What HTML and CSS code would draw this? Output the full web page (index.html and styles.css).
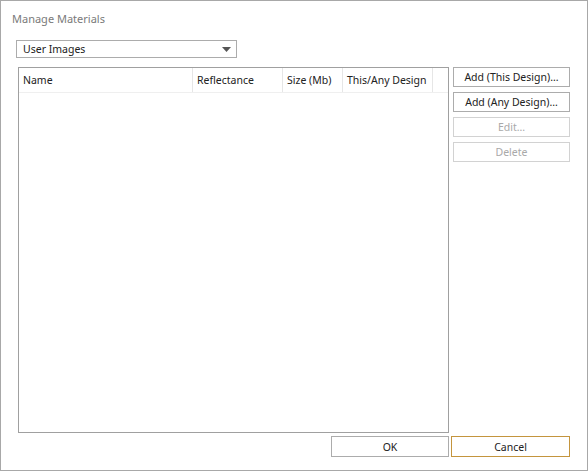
FILE: index.html
```html
<!DOCTYPE html>
<html lang="en">
<head>
<meta charset="utf-8"/>
<title>Manage Materials</title>
<link rel="stylesheet" href="styles.css">
</head>
<body>
<div class="window">
  <div class="title">Manage Materials</div>

  <div class="combo">
    <span>User Images</span>
    <svg class="arrow" width="9" height="5" viewBox="0 0 9 5"><path d="M0 0 L9 0 L4.5 5 Z" fill="#555"/></svg>
  </div>

  <div class="main">
    <div class="list">
      <div class="list-head">
        <div class="col col-name">Name</div>
        <div class="col col-refl">Reflectance</div>
        <div class="col col-size">Size (Mb)</div>
        <div class="col col-scope">This/Any Design</div>
      </div>
    </div>
    <div class="side">
      <button class="btn">Add (This Design)...</button>
      <button class="btn">Add (Any Design)...</button>
      <button class="btn" disabled>Edit...</button>
      <button class="btn" disabled>Delete</button>
    </div>
  </div>

  <div class="footer">
    <button class="btn btn-ok">OK</button>
    <button class="btn btn-cancel">Cancel</button>
  </div>
</div>
</body>
</html>
```

FILE: styles.css
```css
  body {
    margin: 0;
    background: #fff;
    font-family: 'Noto Sans', 'Open Sans', sans-serif;
    font-size: 10.5px;
    color: #222;
  }
  .window {
    width: 588px;
    height: 471px;
    box-sizing: border-box;
    border: 1px solid #a8a8a8;
    background: #fff;
  }
  .title {
    height: 16px;
    line-height: 16px;
    padding: 10px 0 0 11px;
    font-size: 11px;
    color: #7a7a7a;
  }
  .combo {
    margin: 13px 0 0 15px;
    width: 221px;
    height: 18px;
    box-sizing: border-box;
    border: 1px solid #acacac;
    display: flex;
    align-items: center;
    justify-content: space-between;
    padding: 0 5px 0 6px;
  }
  .arrow {
    display: block;
  }
  .main {
    display: flex;
    gap: 4px;
    margin: 9px 16px 0 17px;
  }
  .list {
    width: 431px;
    height: 366px;
    box-sizing: border-box;
    border: 1px solid #a0a0a0;
  }
  .list-head {
    display: flex;
    height: 24px;
    border-bottom: 1px solid #efefef;
  }
  .col {
    box-sizing: border-box;
    padding-left: 4px;
    line-height: 24px;
    border-right: 1px solid #e6e6e6;
    white-space: nowrap;
  }
  .col-name { width: 174px; }
  .col-refl { width: 90px; }
  .col-size { width: 60px; }
  .col-scope { width: 90px; }
  .side {
    display: flex;
    flex-direction: column;
    gap: 5px;
    width: 117px;
  }
  .btn {
    height: 20px;
    padding: 0;
    border: 1px solid #acacac;
    background: #fff;
    font-family: inherit;
    font-size: 10.5px;
    color: #222;
  }
  .btn:disabled {
    border-color: #d2d2d2;
    color: #a9a9a9;
  }
  .footer {
    display: flex;
    justify-content: flex-end;
    gap: 2px;
    margin: 3px 17px 0 0;
  }
  .btn-ok {
    width: 118px;
    height: 21px;
  }
  .btn-cancel {
    width: 119px;
    height: 21px;
    border-color: #c4953e;
  }
```
